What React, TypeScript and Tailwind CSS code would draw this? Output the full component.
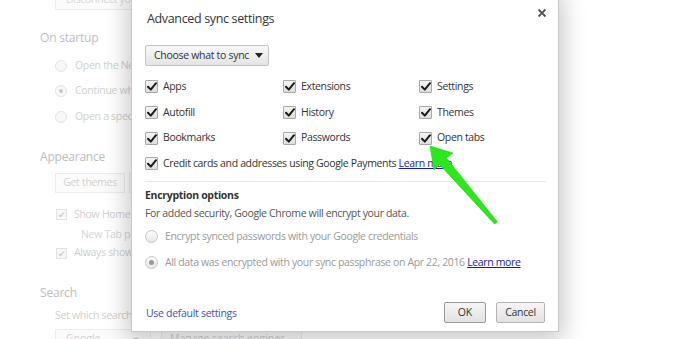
import React from "react";

const font = { fontFamily: '"Open Sans", "Noto Sans", Arial, sans-serif' };

function BgRadio({ checked, label }: { checked?: boolean; label: string }) {
  return (
    <div className="flex h-[25.5px] items-center gap-[8px] whitespace-nowrap pl-[15px]">
      <span className="flex h-[12px] w-[12px] shrink-0 items-center justify-center rounded-full border border-[#e2e2e2] bg-[#f8f8f8]">
        {checked && <span className="h-[4px] w-[4px] rounded-full bg-[#c8c8c8]" />}
      </span>
      <span className="text-[10.5px] tracking-[-0.3px] text-[#cfcfcf]">{label}</span>
    </div>
  );
}

function BgCheck({ label }: { label: string }) {
  return (
    <div className="flex items-center gap-[7px] whitespace-nowrap pl-[16px]">
      <span className="flex h-[11px] w-[11px] shrink-0 items-center justify-center border border-[#e2e2e2] bg-[#f8f8f8] text-[9px] leading-none text-[#cfcfcf]">
        ✔
      </span>
      <span className="text-[10.5px] tracking-[-0.3px] text-[#cfcfcf]">{label}</span>
    </div>
  );
}

function Check({ label }: { label: React.ReactNode }) {
  return (
    <div className="flex h-[25.7px] items-center gap-[5px] whitespace-nowrap">
      <span className="flex h-[13px] w-[13px] shrink-0 items-center justify-center rounded-[1px] border border-[#a8a8a8] bg-gradient-to-b from-[#f4f4f4] to-[#dedede]">
        <svg width="10" height="9" viewBox="0 0 10 9">
          <path d="M1 4.8 L3.8 7.6 L9 1.2" fill="none" stroke="#1a1a1a" strokeWidth="2" strokeLinecap="round" strokeLinejoin="round" />
        </svg>
      </span>
      <span className="text-[10.5px] tracking-[-0.35px] text-[#333]">{label}</span>
    </div>
  );
}

function Radio({ checked, label }: { checked?: boolean; label: React.ReactNode }) {
  return (
    <div className="flex h-[26px] items-center gap-[7px] whitespace-nowrap">
      <span className="flex h-[13px] w-[13px] shrink-0 items-center justify-center rounded-full border border-[#c4c4c4] bg-gradient-to-b from-[#fbfbfb] to-[#e9e9e9]">
        {checked && <span className="h-[5px] w-[5px] rounded-full bg-[#9a9a9a]" />}
      </span>
      <span className="text-[10.5px] tracking-[-0.35px] text-[#9a9a9a]">{label}</span>
    </div>
  );
}

export default function App() {
  return (
    <div className="relative h-[339px] w-[700px] overflow-hidden bg-white" style={font}>
      {/* faded settings page in the background */}
      <div className="flex flex-col pl-[40px]">
        <div className="flex w-[91px] flex-col overflow-hidden">
          <div className="ml-[15px] mt-[-10px] flex h-[20px] w-[200px] shrink-0 items-center whitespace-nowrap border border-[#ececec] bg-[#fbfbfb] pl-[10px] text-[10.5px] tracking-[-0.3px] text-[#d6d6d6]">
            Disconnect your Google Account...
          </div>
          <div className="mt-[19px] whitespace-nowrap text-[12px] leading-[18px] tracking-[-0.2px] text-[#bdbdbd]">On startup</div>
          <div className="mt-[6px] flex flex-col">
            <BgRadio label="Open the New Tab page" />
            <BgRadio checked label="Continue where you left off" />
            <BgRadio label="Open a specific page or set of pages" />
          </div>
          <div className="mt-[18px] whitespace-nowrap text-[12px] leading-[18px] tracking-[-0.2px] text-[#bdbdbd]">Appearance</div>
          <div className="mt-[7px] flex gap-[4px] pl-[15px]">
            <div className="flex h-[20px] w-[70px] shrink-0 items-center justify-center whitespace-nowrap border border-[#ececec] bg-[#fbfbfb] text-[10.5px] tracking-[-0.3px] text-[#d0d0d0]">
              Get themes
            </div>
            <div className="flex h-[20px] w-[130px] shrink-0 items-center justify-center whitespace-nowrap border border-[#ececec] bg-[#fbfbfb] text-[10.5px] tracking-[-0.3px] text-[#d0d0d0]">
              Reset to default theme
            </div>
          </div>
          <div className="mt-[14px]">
            <BgCheck label="Show Home button" />
          </div>
          <div className="mt-[4px] whitespace-nowrap pl-[41px] text-[10.5px] leading-[16px] tracking-[-0.3px] text-[#d6d6d6]">
            New Tab page Change
          </div>
          <div className="mt-[3px]">
            <BgCheck label="Always show the bookmarks bar" />
          </div>
          <div className="mt-[23px] whitespace-nowrap text-[12px] leading-[18px] tracking-[-0.2px] text-[#bdbdbd]">Search</div>
          <div className="mt-[5px] whitespace-nowrap pl-[15px] text-[10.5px] leading-[16px] tracking-[-0.3px] text-[#d0d0d0]">
            Set which search engine is used when searching from the omnibox.
          </div>
        </div>
        <div className="ml-[15px] mt-[6px] flex items-center gap-[10px]">
          <div className="flex h-[20px] w-[96px] items-center justify-between border border-[#ececec] bg-[#fbfbfb] px-[10px] text-[10.5px] text-[#d0d0d0]">
            Google <span className="text-[8px]">▼</span>
          </div>
          <div className="flex h-[20px] items-center whitespace-nowrap border border-[#ececec] bg-[#fbfbfb] px-[8px] text-[10.5px] text-[#d0d0d0]">
            Manage search engines...
          </div>
        </div>
      </div>

      {/* dialog */}
      <div className="absolute left-[131px] top-[-6px] flex h-[338px] w-[428px] flex-col border border-[#c8c8c8] bg-white px-[13px] pt-[13px] shadow-[0_4px_22px_4px_rgba(0,0,0,0.22)]">
        <div className="flex items-center justify-between">
          <div className="pl-[2px] text-[12.5px] leading-[22px] tracking-[-0.35px] text-[#333]">Advanced sync settings</div>
          <svg className="mr-[-2px] mt-[-12px]" width="10" height="10" viewBox="0 0 10 10">
            <path d="M1.5 1.5 L8.5 8.5 M8.5 1.5 L1.5 8.5" stroke="#555" strokeWidth="1.8" />
          </svg>
        </div>
        <div className="mt-[15px] flex h-[21px] w-[124px] items-center justify-between whitespace-nowrap rounded-[2px] border border-[#c3c3c3] bg-gradient-to-b from-[#f8f8f8] to-[#e4e4e4] pl-[8px] pr-[5px] text-[10.5px] tracking-[-0.3px] text-[#333]">
          <span>Choose what to sync</span>
          <svg width="8" height="5" viewBox="0 0 8 5">
            <path d="M0 0 H8 L4 5 Z" fill="#222" />
          </svg>
        </div>
        <div className="mt-[8px] grid grid-cols-[138px_136px_1fr]">
          <Check label="Apps" />
          <Check label="Extensions" />
          <Check label="Settings" />
          <Check label="Autofill" />
          <Check label="History" />
          <Check label="Themes" />
          <Check label="Bookmarks" />
          <Check label="Passwords" />
          <Check label="Open tabs" />
        </div>
        <Check
          label={
            <>
              Credit cards and addresses using Google Payments{" "}
              <span className="text-[#1a1aa6] underline">Learn more</span>
            </>
          }
        />
        <div className="mt-[4px] h-px w-[401px] bg-[#e8e8e8]" />
        <div className="mt-[5px] text-[10.5px] font-bold leading-[16px] tracking-[-0.3px] text-[#333]">Encryption options</div>
        <div className="mt-[2px] text-[10.5px] leading-[16px] tracking-[-0.35px] text-[#555]">
          For added security, Google Chrome will encrypt your data.
        </div>
        <div className="mt-[3px] flex flex-col">
          <Radio label="Encrypt synced passwords with your Google credentials" />
          <Radio
            checked
            label={
              <>
                All data was encrypted with your sync passphrase on Apr 22, 2016{" "}
                <span className="text-[#1a1aa6] underline">Learn more</span>
              </>
            }
          />
        </div>
        <div className="mb-[8px] mt-auto flex items-center justify-between">
          <span className="pl-[1px] pt-[2px] text-[10.5px] tracking-[-0.3px] text-[#3b55b5]">Use default settings</span>
          <div className="flex gap-[10px]">
            <div className="flex h-[21px] w-[42px] items-center justify-center rounded-[2px] border border-[#9a9a9a] bg-gradient-to-b from-[#f6f6f6] to-[#e2e2e2] text-[10.5px] text-[#333]">
              OK
            </div>
            <div className="flex h-[21px] w-[49px] items-center justify-center rounded-[2px] border border-[#b4b4b4] bg-gradient-to-b from-[#f6f6f6] to-[#e2e2e2] text-[10.5px] tracking-[-0.3px] text-[#333]">
              Cancel
            </div>
          </div>
        </div>
      </div>

      {/* green annotation arrow */}
      <svg className="absolute left-0 top-0" width="700" height="339" viewBox="0 0 700 339">
        <polygon
          points="430,146 453,153 446.5,158 497.5,222 494.5,224 439.5,164.5 434,170"
          fill="#2be81c"
          stroke="#27c91a"
          strokeWidth="0.6"
          strokeLinejoin="round"
        />
      </svg>
    </div>
  );
}
